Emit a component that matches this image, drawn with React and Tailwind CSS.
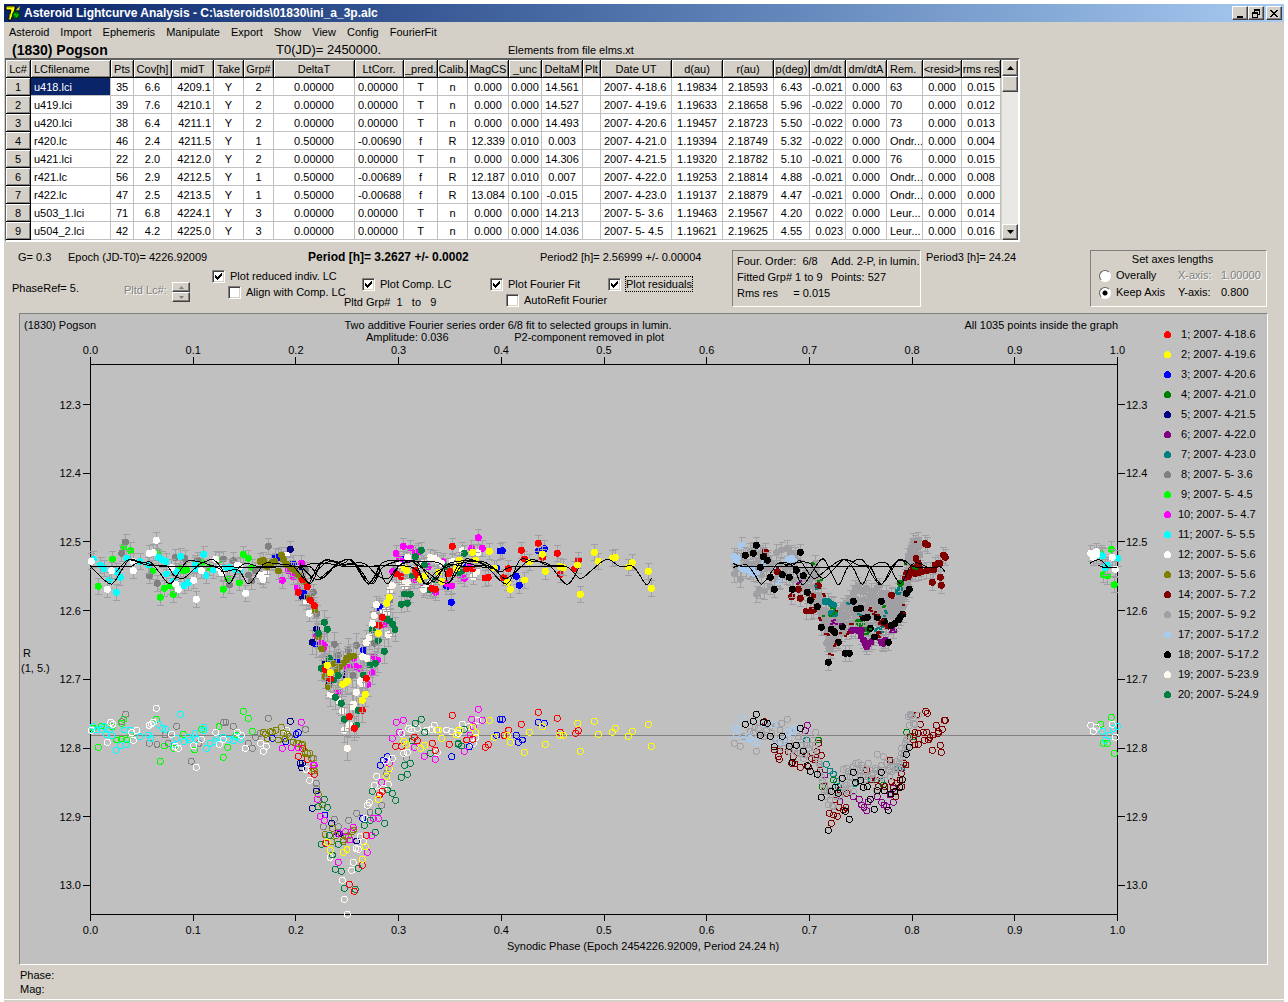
import { useState } from 'react';

const COLORS = {
    1: '#ff0000', 2: '#ffff00', 3: '#0000ff', 4: '#008000', 5: '#000080',
    6: '#800080', 7: '#008080', 8: '#808080', 9: '#00ff00', 10: '#ff00ff',
    11: '#00ffff', 12: '#ffffff', 13: '#808000', 14: '#800000', 15: '#a0a0a4',
    17: '#a6caf0', 18: '#000000', 19: '#fffbf0', 20: '#008040',
};

const LEGEND = [
    [1, '2007- 4-18.6'], [2, '2007- 4-19.6'], [3, '2007- 4-20.6'], [4, '2007- 4-21.0'],
    [5, '2007- 4-21.5'], [6, '2007- 4-22.0'], [7, '2007- 4-23.0'], [8, '2007- 5- 3.6'],
    [9, '2007- 5- 4.5'], [10, '2007- 5- 4.7'], [11, '2007- 5- 5.5'], [12, '2007- 5- 5.6'],
    [13, '2007- 5- 5.6'], [14, '2007- 5- 7.2'], [15, '2007- 5- 9.2'], [17, '2007- 5-17.2'],
    [18, '2007- 5-17.2'], [19, '2007- 5-23.9'], [20, '2007- 5-24.9'],
];

const MENU = ['Asteroid', 'Import', 'Ephemeris', 'Manipulate', 'Export', 'Show', 'View', 'Config', 'FourierFit'];

const COLUMNS = [
    { label: 'Lc#', col: 'w-[25px]' },
    { label: 'LCfilename', col: 'w-[80px]', align: 'text-left pl-[3px]' },
    { label: 'Pts', col: 'w-[23px]' },
    { label: 'Cov[h]', col: 'w-[38px]' },
    { label: 'midT', col: 'w-[42px]', align: 'text-right pr-[2px]' },
    { label: 'Take', col: 'w-[30px]' },
    { label: 'Grp#', col: 'w-[30px]' },
    { label: 'DeltaT', col: 'w-[81px]' },
    { label: 'LtCorr.', col: 'w-[49px]', align: 'text-left pl-[3px]' },
    { label: '_pred.', col: 'w-[34px]' },
    { label: 'Calib.', col: 'w-[30px]' },
    { label: 'MagCS', col: 'w-[41px]' },
    { label: '_unc', col: 'w-[33px]' },
    { label: 'DeltaM', col: 'w-[41px]' },
    { label: 'Plt', col: 'w-[18px]' },
    { label: 'Date UT', col: 'w-[71px]', align: 'text-left pl-[3px]' },
    { label: 'd(au)', col: 'w-[51px]' },
    { label: 'r(au)', col: 'w-[51px]' },
    { label: 'p(deg)', col: 'w-[36px]' },
    { label: 'dm/dt', col: 'w-[36px]', align: 'text-right pr-[2px]' },
    { label: 'dm/dtA', col: 'w-[41px]' },
    { label: 'Rem.', col: 'w-[36px]', align: 'text-left pl-[3px]' },
    { label: '<resid>', col: 'w-[39px]' },
    { label: 'rms res', col: 'w-[39px]' },
];

const ROWS = [
    '1|u418.lci|35|6.6|4209.1|Y|2|0.00000|0.00000|T|n|0.000|0.000|14.561||2007- 4-18.6|1.19834|2.18593|6.43|-0.021|0.000|63|0.000|0.015',
    '2|u419.lci|39|7.6|4210.1|Y|2|0.00000|0.00000|T|n|0.000|0.000|14.527||2007- 4-19.6|1.19633|2.18658|5.96|-0.022|0.000|70|0.000|0.012',
    '3|u420.lci|38|6.4|4211.1|Y|2|0.00000|0.00000|T|n|0.000|0.000|14.493||2007- 4-20.6|1.19457|2.18723|5.50|-0.022|0.000|73|0.000|0.013',
    '4|r420.lc|46|2.4|4211.5|Y|1|0.50000|-0.00690|f|R|12.339|0.010|0.003||2007- 4-21.0|1.19394|2.18749|5.32|-0.022|0.000|Ondr...|0.000|0.004',
    '5|u421.lci|22|2.0|4212.0|Y|2|0.00000|0.00000|T|n|0.000|0.000|14.306||2007- 4-21.5|1.19320|2.18782|5.10|-0.021|0.000|76|0.000|0.015',
    '6|r421.lc|56|2.9|4212.5|Y|1|0.50000|-0.00689|f|R|12.187|0.010|0.007||2007- 4-22.0|1.19253|2.18814|4.88|-0.021|0.000|Ondr...|0.000|0.008',
    '7|r422.lc|47|2.5|4213.5|Y|1|0.50000|-0.00688|f|R|13.084|0.100|-0.015||2007- 4-23.0|1.19137|2.18879|4.47|-0.021|0.000|Ondr...|0.000|0.000',
    '8|u503_1.lci|71|6.8|4224.1|Y|3|0.00000|0.00000|T|n|0.000|0.000|14.213||2007- 5- 3.6|1.19463|2.19567|4.20|0.022|0.000|Leur...|0.000|0.014',
    '9|u504_2.lci|42|4.2|4225.0|Y|3|0.00000|0.00000|T|n|0.000|0.000|14.036||2007- 5- 4.5|1.19621|2.19625|4.55|0.023|0.000|Leur...|0.000|0.016',
].map((row) => row.split('|'));

// Readings are stored per block, in thirds of a plot unit from the block's origin
const parse = (ox, oy, text) =>
    text.trim().split(/\s+/).map((pair) => {
        const [x, y] = pair.split(',').map(Number);
        return [ox + x / 3, oy + y / 3];
    });

const MEASURED = [
    { origin: [80, 500], series: [
        [9, '55,259 97,177 131,142 152,152 233,155 241,292 253,265 280,283 270,258 310,212 365,187 387,203 430,268 443,236 478,248 490,163 505,175 517,203 218,213 300,205 320,210 417,180'],
        [8, '137,126 125,160 208,227 232,250 285,173 315,175 345,190 565,139 515,243 527,212 449,255 430,177 460,182 677,210 700,277 710,341 763,433 829,436 805,452 775,466 818,526 883,430 353,180 505,225'],
        [11, '40,178 62,195 72,205 88,240 109,277 121,232 140,175 180,185 205,195 235,172 245,178 258,185 302,169 371,163 280,243 312,256 325,248 345,195 378,227 400,210 430,205 448,203 465,208 480,215 260,222 290,215 350,210 110,215'],
        [12, '34,184 82,268 95,212 160,185 160,212 208,160 220,158 229,121 275,203 295,268 287,252 341,241 364,212 407,178 349,298 425,218 472,195 497,280 418,205 545,230 549,238 558,222 540,225 620,165 678,303 688,340 480,200'],
        [5, '631,148 697,427 709,387 667,291 735,490 658,212 795,523 745,550'],
        [3, '587,168 595,172 710,435 672,275 850,450 852,460 898,324 640,190 770,485'],
        [10, '664,189 607,241 625,212 640,210 652,262 640,230 710,407 733,437 730,445 725,430 773,576 808,502 828,500 840,505 820,475 882,470 876,518 863,553 893,480 800,505'],
        [13, '550,181 540,185 562,200 575,188 595,213 585,185 604,165 610,178 620,193 635,205 645,212 655,225 665,235 672,245 705,330 715,410 725,446 735,530 745,560 735,500 760,490 770,510 780,500 790,490 800,480 810,470 820,468 688,295 800,475'],
        [19, '802,745 793,691 787,633 808,675 820,612 817,620 829,577 841,545 847,552 859,428 868,412 883,346 890,314 751,583 778,604 845,540 877,373 848,470 860,475'],
        [20, '733,367 742,388 715,400 748,475 724,505 760,540 766,592 784,610 775,526 793,658 829,675 835,631 850,525 870,495 886,490 877,388 895,421'],
        [1, '655,277 682,260 691,301 703,317 668,240 735,508 752,537 808,650 823,685 847,631 859,535 895,376'],
        [2, '742,496 751,518 788,553 797,548 803,544 847,601 856,583 895,400'],
    ] },
    { origin: [300, 500], series: [
        [8, '223,430 270,300 285,205 320,275'],
        [3, '238,320 454,307 600,153 607,152 590,204 649,229 658,256 715,153 733,146 310,178 440,260 500,200'],
        [10, '310,139 331,144 288,160 298,178 345,160 278,215 320,180 343,240 373,262 407,277 535,113 547,145 515,145 430,185 493,235 510,200 455,257 385,200 440,250 250,375 480,225 355,155'],
        [19, '323,172 310,250 322,248 315,258 390,172 403,175 412,182 371,268 378,262 457,184 487,152 533,158 520,230 472,190 530,215 265,404 277,256 270,270 229,314 222,346 218,370 250,335 262,335 350,205 370,190 425,190 298,195 390,250'],
        [20, '253,454 285,388 278,373 270,363 262,358 313,282 331,283 304,313 322,310 364,151 346,170 373,195 337,228 406,240 390,270 493,160 485,212 440,200 235,421 475,220'],
        [1, '247,352 238,376 290,222 303,230 347,210 350,220 395,265 406,268 446,222 450,215 457,139 500,207 518,207 555,234 565,232 611,233 625,206 664,151 673,177 715,130 728,172 772,160 781,223 823,207 835,180 355,230'],
        [2, '235,400 260,310 268,292 313,205 320,212 362,238 375,228 416,217 426,245 470,205 478,180 518,157 527,180 568,154 583,204 622,247 631,268 674,240 688,186 727,163 736,214 780,200 790,203 833,195 841,283 883,157 895,184 937,174 946,172 985,201 997,188 1045,214 1054,265'],
    ] },
    { origin: [700, 500], series: [
        [15, '103,222 121,238 170,283 193,273 130,170 150,155 160,150 180,160 190,165 230,158 262,145 240,195 255,210 215,190 200,205 210,260 232,235 285,165 290,180 270,200 280,240 300,230 310,260 320,215 335,215 345,190 350,205 330,240 345,260 322,265 340,285 355,245 360,310 360,330 365,345 370,360 375,380 380,400 385,420 388,440 392,450 395,360 400,400 405,345 410,380 420,330 430,320 440,310 450,295 460,280 465,265 475,255 480,270 470,300 490,275 500,265 490,300 510,290 500,320 520,310 530,265 538,258 545,280 550,300 560,280 545,320 565,300 575,290 580,310 590,300 600,290 600,315 605,275 612,290 570,330 585,340 560,345 540,340 520,345 480,340 460,340 440,350 430,365 450,370 475,360 500,345 530,360 595,335 410,420 425,400 440,395 380,335 395,375 415,350 445,330 460,315 480,320 515,330 620,260 625,240 630,215 635,195 625,185 630,160 635,140 640,125 645,130 655,120 650,145 640,160 660,165 640,180'],
        [15, '110,205 140,190 165,195 175,180 185,225 180,270 205,175 225,210 245,150 260,230 275,160 300,250 315,235 335,235 350,225 355,285 365,290 350,300 375,350 385,365 390,395 400,430 380,430 405,365 420,355 430,345 455,320 470,320 490,330 505,305 515,275 525,290 540,300 555,320 570,310 585,325 605,305 610,320 595,350 575,350 550,350 530,325 510,350 490,355 465,355 455,385 480,380 510,375 535,350 615,275 622,225 625,170 632,150 655,135 630,235'],
        [17, '125,137 103,170 112,175 108,182 125,205 140,210 150,215 160,220 170,222 155,208 230,205 237,245 265,178 275,175 282,185 240,240 193,190'],
        [14, '196,155 232,215 275,290 301,295 320,333 333,333 340,330 338,290 355,257 295,268 537,404 560,380 575,285 545,370 675,130 682,135 730,165 736,172 697,247 721,232 724,256 715,190 705,195 690,210 680,212 665,215 655,218 645,220 635,215 615,232 625,230 648,175 655,190 650,200 640,205 660,205 700,210 720,190 620,220'],
        [7, '375,305 385,305 395,312 400,315 393,340 405,340 595,275 600,268'],
        [4, '602,250 475,367 485,368 497,390 500,395'],
        [6, '455,392 465,390 475,392 485,390 483,408 490,420 495,430 500,440 508,430 515,425 545,428 550,430 556,420 580,390'],
        [18, '136,166 160,160 169,136 190,170 202,181 181,202 211,232 247,224 268,232 223,268 289,211 301,157 310,227 277,268 322,277 331,301 352,320 364,382 427,380 394,388 400,393 405,397 415,427 385,487 436,460 448,460 460,304 470,327 482,325 490,354 502,352 511,385 523,411 532,352 544,304 553,364 565,427 573,376 585,370 595,360 600,352 608,343 619,280 628,268'],
        [9, '1234,148 1210,224 1222,228 1243,254 1203,160'],
        [11, '1205,167 1208,168 1254,175 1215,202 1222,195'],
        [12, '1172,160 1180,172 1189,155 1190,165 1237,172 1246,208'],
    ] },
];

// Specks of the fainter series that show through the grey cluster
const SPECKS = [
    [14, '370,280 372,286 358,350 360,356 375,400 380,398 405,430 402,436 395,462 388,460 440,400 436,405 444,392 510,320 506,326 514,330 480,345 455,368 450,370 420,395 408,330 520,340 535,342 524,333 546,358 552,376 612,335 575,292 330,320 384,402 232,200 290,250 646,122 610,312'],
    [7, '445,308 440,306 555,330 558,336 540,385 546,392 528,385 534,380 475,340 480,343 345,255 348,265 552,345 545,378 525,390'],
    [4, '355,240 362,238 398,340 390,345 404,332 640,200 648,203 550,318 552,314 340,190 336,186 394,320 402,325 480,376 510,384 616,190 370,346'],
    [6, '400,365 395,360 408,368 392,370 402,356 300,240 294,246 572,386 586,394 570,394 535,418 420,368 612,235'],
];

const RESIDUALS = [
    { origin: [80, 500], series: [
        [9, '55,742 97,680 131,658 125,670 152,706 241,784 253,738 281,745 310,703 344,750 365,688 430,772 443,742 490,634 505,655 517,694 417,680 229,658 64,678 110,720 140,720 40,685 125,717 470,705'],
        [8, '137,643 125,665 208,730 231,733 290,679 334,784 357,730 438,667 431,667 460,679 505,730 517,745 527,712 565,655 676,688 255,705 265,730 540,700 700,775'],
        [11, '40,680 72,680 88,690 50,690 65,688 80,703 95,707 109,751 121,737 140,733 134,690 152,690 180,710 205,705 213,715 235,673 248,685 257,688 302,643 280,735 290,715 312,725 325,712 330,720 345,700 350,718 371,682 380,745 390,730 405,725 410,715 430,712 448,718 460,722 470,710 482,718 33,690 372,692'],
        [12, '34,691 82,727 92,667 99,673 160,721 170,691 155,698 207,676 214,672 220,667 229,625 275,703 286,739 295,745 341,737 349,802 364,718 407,697 418,733 472,697 484,706 430,718 496,745 542,730 559,739 550,754 620,690'],
        [5, '631,664 667,790 660,790'],
        [3, '577,715 617,725 648,703 655,698'],
        [10, '664,667 607,745 634,743 703,796'],
        [13, '550,697 557,703 562,715 571,695 577,696 587,691 595,720 604,682 610,700 615,715 622,703 628,710 640,727 650,730 655,730 668,733 675,755 690,760'],
        [1, '655,769 668,745 682,778 694,814 703,823'],
    ] },
    { origin: [200, 690], series: [
        [8, '349,280 341,205 317,118 370,410 403,388 415,410 446,391 470,370 510,367 545,346 560,250 350,295 620,205'],
        [5, '301,220 305,233 349,303 337,355 395,400 413,430 418,432 470,453'],
        [3, '562,200 550,210 541,226 495,385 488,385 375,375 755,200'],
        [13, '295,160 305,165 315,190 322,190 335,205 340,235 343,243 355,313 397,415 375,433 408,437 395,455 430,450 438,440 445,437 455,425 460,420 368,345 430,455'],
        [10, '295,173 340,225 352,328 361,379 373,391 415,517 437,425 460,412 450,450 502,487 535,385 545,277 568,220 577,145 598,127 589,97 610,91 643,172 673,199 706,208 520,385 515,437 415,430'],
        [19, '329,271 318,238 390,502 427,571 433,628 442,673 455,541 460,517 475,478 480,440 502,346 508,338 523,286 530,259 565,283 550,295 557,212 577,205 611,190 622,187 626,115 635,120 652,115 680,120 703,106 695,118 710,120 712,187 755,125 740,120 495,385 490,455 468,475 535,305 605,130'],
        [20, '373,328 382,352 355,350 388,436 364,463 397,495 406,538 424,544 433,595 466,598 475,535 415,463 526,427 554,400 493,406 511,391 535,364 517,304 562,300 577,310 587,331 604,262 622,253 614,226 631,220 646,100 664,88 674,127 637,152 691,190 775,160'],
        [1, '377,460 448,583 463,604 487,526 499,436 547,304 538,315 587,169 605,169 643,142 652,152 697,160 706,181 748,163 757,76'],
        [2, '382,457 391,481 430,487 441,479 487,508 496,470 535,328 560,259 568,236 611,154 620,163 662,175 674,166 715,120 725,145 770,135 775,120'],
    ] },
    { origin: [300, 500], series: [
        [12, '487,673 505,680 533,661 520,730 475,700 528,712'],
        [3, '600,658 607,658 590,706 649,706 655,727 667,720 715,667 733,670 508,740'],
        [10, '535,628 515,658 547,661 493,754 520,680 510,705'],
        [20, '493,688 485,738 475,733'],
        [1, '500,720 518,718 556,742 565,734 612,706 626,690 664,673 715,637 772,655 781,697 827,700 835,692'],
        [2, '478,691 527,698 518,682 568,661 583,712 622,706 631,727 673,757 688,697 727,680 736,733 779,706 790,706 833,670 841,754 883,664 895,703 937,697 946,685 985,709 997,694 1045,673 1054,739'],
    ] },
    { origin: [700, 690], series: [
        [4, '620,127 640,140 355,150 400,270 367,290 550,285'],
        [6, '322,106 316,122 478,328 485,345 492,352 500,362 460,320 532,320 545,337 552,345 560,350 580,337 570,315 505,335 580,295 420,335 605,235 375,255'],
        [7, '379,223 390,243 400,252 410,275 415,290 320,150 595,235 605,232 465,280 515,270 545,275'],
        [14, '193,95 235,200 238,208 223,180 240,183 265,185 275,220 285,222 301,232 280,200 320,195 325,230 335,205 345,210 350,185 364,196 356,160 360,240 388,370 400,375 412,379 394,400 417,352 430,360 438,352 405,330 420,300 375,290 440,310 500,240 510,270 530,270 535,290 555,290 575,275 580,290 587,320 590,280 600,270 604,250 605,290 612,220 618,225 677,64 682,70 709,106 715,125 727,118 733,91 736,91 697,181 721,166 724,187 690,142 680,127 673,151 670,127 655,130 655,163 645,127 640,150 630,140 661,103 650,75 700,135 715,130 685,150 570,210 645,165'],
        [15, '103,160 121,169 169,184 130,140 262,88 230,105 240,120 160,130 175,115 185,130 200,120 210,110 240,160 250,175 270,185 280,180 295,140 310,140 320,165 330,165 340,150 347,127 345,175 325,175 300,190 310,205 355,215 360,230 360,255 368,275 375,285 380,320 385,345 397,348 390,300 420,320 430,238 445,245 450,260 460,230 467,220 475,218 480,240 490,235 505,220 510,240 490,260 520,250 530,240 532,193 550,200 545,225 560,220 570,230 575,215 590,215 585,240 600,205 605,190 610,200 600,235 570,260 555,255 535,260 505,262 480,260 450,280 435,300 460,305 530,300 615,180 615,160 625,140 628,106 625,80 632,72 640,85 655,76 645,103 440,285'],
        [15, '150,125 165,110 190,140 215,130 225,145 255,150 270,160 285,165 305,165 315,195 335,190 310,180 290,190 270,120 245,100 350,200 358,222 365,262 372,300 382,305 390,330 400,350 410,320 425,265 440,235 455,245 470,235 485,225 495,245 515,255 525,235 540,245 550,240 565,240 580,228 592,230 597,220 605,175 612,190 620,150 622,170 630,75 635,78 640,100 575,245 545,262 520,265 495,270 465,265 440,260 430,290 445,305 430,310'],
        [17, '103,111 112,118 109,133 125,83 130,147 145,140 150,145 160,155 172,158 222,105 192,102 235,155 245,155 260,145 265,128 272,120 280,125 290,115'],
        [18, '136,103 160,94 169,73 190,97 202,100 181,136 211,139 247,139 301,115 223,170 268,169 289,166 310,184 277,217 322,227 331,244 352,253 364,322 385,421 394,304 406,292 415,310 427,265 436,364 448,388 460,247 467,277 482,271 490,292 502,290 511,328 523,358 544,247 532,302 553,302 565,361 573,312 585,305 600,292 607,269 619,193 628,172'],
        [9, '1234,82 1202,103 1210,160 1222,160 1243,190'],
        [11, '1252,109 1208,124 1228,136 1216,151 1240,115'],
        [12, '1172,106 1180,124 1189,112 1237,103 1246,142'],
    ] },
];

const FIT_CURVES = [
    [80, 500, '32,200 60,228 95,252 125,210 150,178 185,188 212,187 240,220 270,252 300,212 325,182 370,187 397,178 425,205 447,252 475,205 500,190 540,200 640,200'],
    [80, 500, '32,200 110,200 150,200 180,186 220,195 265,200 400,200 430,215 475,210 505,252 535,215 555,190 600,192 640,200 690,250 720,195 740,178 770,188 805,178 835,205 865,250 900,200'],
    [80, 500, '110,215 145,180 200,195 260,198 280,225 310,235 345,205 370,188 420,200 640,200 700,190 740,190 800,200 900,200'],
    [80, 500, '650,205 690,200 725,235 765,195 810,180 850,230 880,250 900,215'],
    [300, 500, '0,190 25,250 55,195 85,180 130,190 155,180 205,252 240,195 265,182 300,182 345,190 375,250 400,240 440,195 470,185 520,182 560,200 620,252 660,180 700,185 745,192 800,253 835,205'],
    [300, 500, '0,195 40,235 68,235 110,195 150,178 185,215 215,250 250,200 320,180 360,200 440,250 490,185 510,178 580,205 620,235 690,180 740,195 800,200 840,235 870,215 920,178 960,200 1000,200 1038,253 1054,235'],
    [300, 500, '30,235 85,185 150,200 330,200 375,252 410,215 480,190 550,185 600,215 640,200 800,200'],
    [300, 500, '60,235 120,195 210,200 235,200 262,252 300,195 350,185 400,245 440,195 500,200 560,195'],
    [300, 500, '120,195 190,190 230,225 265,235 310,190 420,190 445,250 480,190 540,200 580,205'],
    [700, 500, '100,202 140,195 165,225 185,252 215,215 235,190 275,195 300,245 315,250 350,195 372,178 400,230 418,253 445,200 485,178 520,230 545,253 580,195 610,180 640,200 700,203 720,200 735,215'],
    [700, 500, '100,190 135,200 270,200 320,202 460,200 610,200'],
    [700, 500, '240,190 280,195 300,182 330,225 347,235 385,205 430,178 460,205 487,253 515,200 560,190 600,250 630,200 650,188 680,200'],
    [700, 500, '250,200 290,188 330,190 370,235 430,180 475,195 510,200 545,252 595,180 620,195'],
    [700, 500, '1170,190 1190,180 1205,182 1225,202 1250,202'],
    [700, 500, '1195,195 1215,203 1250,202'],
];

// Catmull-Rom spline through the points
const smooth = (pts) => {
    let d = `M${pts[0][0]} ${pts[0][1]}`;
    for (let i = 0; i < pts.length - 1; i++) {
        const p0 = pts[i - 1] || pts[i];
        const p1 = pts[i];
        const p2 = pts[i + 1];
        const p3 = pts[i + 2] || p2;
        const c = [
            p1[0] + (p2[0] - p0[0]) / 6, p1[1] + (p2[1] - p0[1]) / 6,
            p2[0] - (p3[0] - p1[0]) / 6, p2[1] - (p3[1] - p1[1]) / 6,
        ];
        d += `C${c.map((v) => v.toFixed(1)).join(' ')} ${p2[0].toFixed(1)} ${p2[1].toFixed(1)}`;
    }
    return d;
};

const X_TICKS = Array.from({ length: 11 }, (_, i) => ({ x: 90.5 + i * 102.7, label: (i / 10).toFixed(1) }));
const Y_TICKS = Array.from({ length: 8 }, (_, i) => ({ y: 404.5 + i * 68.7, label: (12.3 + i / 10).toFixed(1) }));

function Chart() {
    const measured = MEASURED.flatMap(({ origin, series }) =>
        series.map(([id, text]) => ({ id, pts: parse(origin[0], origin[1], text) })));
    const residuals = RESIDUALS.flatMap(({ origin, series }) =>
        series.map(([id, text]) => ({ id, pts: parse(origin[0], origin[1], text) })));

    return (
        <svg viewBox="20 314 1142 650" className="block min-w-0 flex-1" fontFamily="'Liberation Sans', Arial, sans-serif" fontSize="11" role="img" aria-label="Light curve">
            <text x="24" y="329">(1830) Pogson</text>
            <text x="508" y="329" textAnchor="middle">Two additive Fourier series order 6/8 fit to selected groups in lumin.</text>
            <text x="366" y="341">Amplitude: 0.036</text>
            <text x="664" y="341" textAnchor="end">P2-component removed in plot</text>
            <text x="1118" y="329" textAnchor="end">All 1035 points inside the graph</text>
            <text x="23" y="657">R</text>
            <text x="21" y="672">(1, 5.)</text>
            <text x="643" y="950" textAnchor="middle">Synodic Phase (Epoch 2454226.92009, Period 24.24 h)</text>

            {X_TICKS.map(({ x, label }) => (
                <g key={label} textAnchor="middle">
                    <text x={x} y="354">{label}</text>
                    <text x={x} y="934">{label}</text>
                    <path d={`M${x} 357V364M${x} 914V921`} stroke="#000" shapeRendering="crispEdges" />
                </g>
            ))}
            {Y_TICKS.map(({ y, label }) => (
                <g key={label}>
                    <text x="81" y={y + 4} textAnchor="end">{label}</text>
                    <text x="1126" y={y + 4}>{label}</text>
                    <path d={`M83 ${y}H90M1118 ${y}H1125`} stroke="#000" shapeRendering="crispEdges" />
                </g>
            ))}
            <rect x="90.5" y="364.5" width="1027" height="550" fill="none" stroke="#000" shapeRendering="crispEdges" />
            <path d="M91 735.5H1117" stroke="#808080" shapeRendering="crispEdges" />

            <g shapeRendering="crispEdges">
                {measured.map(({ id, pts }, i) => (
                    <g key={i}>
                        {pts.map(([x, y], j) => {
                            const e = y > 620 && x < 450 ? 12 : 8;
                            return (
                                <path
                                    key={j}
                                    d={`M${x} ${y - e}V${y + e}M${x - 3} ${y - e}h7M${x - 3} ${y + e}h7`}
                                    stroke="#a0a0a4"
                                />
                            );
                        })}
                        {pts.map(([x, y], j) => <circle key={j} cx={x} cy={y} r="3.5" fill={COLORS[id]} />)}
                    </g>
                ))}
                {SPECKS.map(([id, text]) => (
                    <g key={id} fill={COLORS[id]}>
                        {parse(700, 500, text).map(([x, y], j) => <rect key={j} x={x - 1} y={y} width="3" height="2" />)}
                    </g>
                ))}
                {residuals.map(({ id, pts }, i) => (
                    <g key={i} fill="none" stroke={COLORS[id]}>
                        {pts.map(([x, y], j) => <circle key={j} cx={x} cy={y} r="3" />)}
                    </g>
                ))}
                {FIT_CURVES.map(([ox, oy, text], i) => (
                    <path key={i} d={smooth(parse(ox, oy, text))} fill="none" stroke="#000" />
                ))}
            </g>
        </svg>
    );
}

function Check({ label, defaultChecked = false, focused = false, className = '' }) {
    const [checked, setChecked] = useState(defaultChecked);
    return (
        <label className={`flex h-4 items-center gap-1 whitespace-nowrap ${className}`}>
            <span className="grid size-[13px] place-items-center">
                <input
                    type="checkbox"
                    checked={checked}
                    onChange={() => setChecked(!checked)}
                    className="col-start-1 row-start-1 size-[13px] appearance-none border border-t-[#808080] border-l-[#808080] border-r-white border-b-white bg-white shadow-[inset_1px_1px_0_#404040,inset_-1px_-1px_0_#d4d0c8]"
                />
                {checked && (
                    <svg viewBox="0 0 7 7" className="pointer-events-none col-start-1 row-start-1 size-[7px]" shapeRendering="crispEdges">
                        <path d="M0 2h1v1h1v1h1v-1h1v-1h1v-1h1v-1h1v3h-1v1h-1v1h-1v1h-1v1h-1v-1h-1v-1h-1z" />
                    </svg>
                )}
            </span>
            <span className={focused ? 'border border-dotted border-black leading-[14px]' : 'px-px'}>{label}</span>
        </label>
    );
}

function Radio({ label, defaultChecked = false }) {
    return (
        <label className="flex items-center gap-[5px] whitespace-nowrap">
            <input
                type="radio"
                name="axes"
                defaultChecked={defaultChecked}
                className="size-3 appearance-none rounded-full border border-t-[#606060] border-l-[#606060] border-r-white border-b-white bg-white checked:bg-[radial-gradient(circle,#000_2px,#fff_3px)]"
            />
            {label}
        </label>
    );
}

const RAISED = 'flex items-center justify-center border border-t-white border-l-white border-r-[#404040] border-b-[#404040] bg-[#d4d0c8] shadow-[inset_-1px_-1px_0_#808080]';
const SUNKEN = 'border border-t-[#808080] border-l-[#808080] border-r-white border-b-white';
const DISABLED = 'text-[#808080] [text-shadow:1px_1px_0_#fff]';

function TitleBar() {
    return (
        <header className="flex h-[18px] items-center bg-linear-to-r from-[#0a246a] to-[#a6caf0] pr-[2px] pl-px">
            <svg viewBox="0 0 16 16" className="size-4 shrink-0">
                <path d="M1 1h9v3L6 15H3L6 5H1z" fill="#ffff00" stroke="#000" />
                <path d="M2 2h6M5 9l-1 5" stroke="#808000" />
                <circle cx="11" cy="10" r="3.5" fill="#008000" stroke="#003000" />
                <path d="M9 9l2 1M11 12l2-3" stroke="#00ff00" />
                <path d="M11 5l4-4-1 4z" fill="#ffff00" stroke="#808000" strokeWidth=".5" />
            </svg>
            <h1 className="ml-[3px] flex-1 truncate text-[12px] font-bold text-white">
                Asteroid Lightcurve Analysis - C:\asteroids\01830\ini_a_3p.alc
            </h1>
            <button aria-label="Minimize" className={`${RAISED} h-[14px] w-4`}>
                <svg viewBox="0 0 10 9" className="h-[9px] w-[10px]" shapeRendering="crispEdges"><path d="M2 7h6v2H2z" /></svg>
            </button>
            <button aria-label="Restore" className={`${RAISED} h-[14px] w-4`}>
                <svg viewBox="0 0 10 9" className="h-[9px] w-[10px]" fill="none" stroke="#000" shapeRendering="crispEdges">
                    <path d="M3.5 3V.5h5v5H7M3 1.5h6M1.5 3.5h5v5h-5zM1 4.5h6" />
                </svg>
            </button>
            <button aria-label="Close" className={`${RAISED} ml-[2px] h-[14px] w-4`}>
                <svg viewBox="0 0 8 7" className="h-[7px] w-2" shapeRendering="crispEdges">
                    <path d="M0 0h2v1h1v1h2v-1h1v-1h2v1h-1v1h-1v1h-1v1h1v1h1v1h1v1h-2v-1h-1v-1h-2v1h-1v1h-2v-1h1v-1h1v-1h1v-1h-1v-1h-1v-1h-1z" />
                </svg>
            </button>
        </header>
    );
}

function LightcurveTable() {
    const head = 'h-[18px] overflow-hidden border-r border-b border-black bg-[#d4d0c8] pt-px pr-0 pb-0 font-normal whitespace-nowrap shadow-[inset_1px_1px_0_#fff,inset_-1px_-1px_0_#808080]';
    return (
        <div className="ml-px flex w-fit border-t-2 border-l border-t-[#606060] border-l-[#606060] border-r-2 border-b-2 border-r-white border-b-white">
            <table className="w-[995px] table-fixed border-separate border-spacing-0 bg-white text-center leading-4">
                <colgroup>
                    {COLUMNS.map((c) => <col key={c.label} className={c.col} />)}
                </colgroup>
                <thead>
                    <tr>
                        {COLUMNS.map((c) => (
                            <th
                                key={c.label}
                                scope="col"
                                className={`${head} ${c.label === 'LCfilename' || c.label === 'Rem.' ? 'pl-[3px] text-left' : 'pl-0 text-center'}`}
                            >
                                {c.label}
                            </th>
                        ))}
                    </tr>
                </thead>
                <tbody>
                    {ROWS.map((row, r) => (
                        <tr key={row[1]}>
                            <th scope="row" className={`${head} pl-0`}>{row[0]}</th>
                            {row.slice(1).map((value, i) => (
                                <td
                                    key={i}
                                    className={`h-[18px] overflow-hidden border-r border-b border-[#c0c0c0] pt-px pb-0 whitespace-nowrap ${COLUMNS[i + 1].align || 'px-0'} ${r === 0 && i === 0 ? 'bg-[#0a246a] text-white' : ''}`}
                                >
                                    {value}
                                </td>
                            ))}
                        </tr>
                    ))}
                </tbody>
            </table>
            <div className="ml-px flex w-4 flex-col bg-[#eae8e4]">
                <button aria-label="Scroll up" className={`${RAISED} h-4`}>
                    <svg viewBox="0 0 7 4" className="h-1 w-[7px]"><path d="M3.5 0L7 4H0z" /></svg>
                </button>
                <div className={`${RAISED} h-4`} />
                <div className="flex-1" />
                <button aria-label="Scroll down" className={`${RAISED} h-4`}>
                    <svg viewBox="0 0 7 4" className="h-1 w-[7px]"><path d="M0 0h7L3.5 4z" /></svg>
                </button>
            </div>
        </div>
    );
}

function Controls() {
    return (
        <section className="flex h-[71px] items-start pr-[17px]">
            <div className="w-[728px] shrink-0 pt-[7px]">
                <div className="flex h-4 items-center whitespace-nowrap">
                    <span className="ml-3.5 w-[50px]">G= 0.3</span>
                    <span className="w-[240px]">Epoch (JD-T0)= 4226.92009</span>
                    <strong className="w-[232px] text-[12px]">Period [h]= 3.2627 +/- 0.0002</strong>
                    <span>Period2 [h]= 2.56999 +/- 0.00004</span>
                </div>
                <div className="flex items-start pt-[3px] whitespace-nowrap">
                    <span className="mt-[13px] ml-2 w-[112px]">PhaseRef= 5.</span>
                    <span className={`mt-[15px] w-12 ${DISABLED}`}>Pltd Lc#:</span>
                    <div className="mt-[14px] flex w-10 flex-col">
                        <button disabled aria-label="Next" className={`${RAISED} h-2.5 w-[18px]`}>
                            <svg viewBox="0 0 5 3" className="h-[3px] w-[5px]" fill="#808080"><path d="M2.5 0L5 3H0z" /></svg>
                        </button>
                        <button disabled aria-label="Previous" className={`${RAISED} h-2.5 w-[18px]`}>
                            <svg viewBox="0 0 5 3" className="h-[3px] w-[5px]" fill="#808080"><path d="M0 0h5L2.5 3z" /></svg>
                        </button>
                    </div>
                    <div className="w-[132px]">
                        <Check label="Plot reduced indiv. LC" defaultChecked />
                        <Check label="Align with Comp. LC" className="ml-4" />
                    </div>
                    <div className="w-[146px] pt-2">
                        <Check label="Plot Comp. LC" defaultChecked className="ml-[18px]" />
                        <p className="pt-[3px] whitespace-pre">Pltd Grp#  1   to   9</p>
                    </div>
                    <div className="w-[118px] pt-2">
                        <Check label="Plot Fourier Fit" defaultChecked />
                        <Check label="AutoRefit Fourier" className="ml-4" />
                    </div>
                    <div className="pt-2">
                        <Check label="Plot residuals" defaultChecked focused />
                    </div>
                </div>
            </div>
            <div className={`mt-2 grid h-[57px] w-[189px] shrink-0 grid-cols-[94px_1fr] content-start pt-[2px] pl-1 leading-4 whitespace-pre ${SUNKEN}`}>
                <span>Four. Order:  6/8</span>
                <span>Add. 2-P, in lumin.</span>
                <span>Fitted Grp# 1 to 9</span>
                <span>Points: 527</span>
                <span>Rms res     = 0.015</span>
            </div>
            <span className="mt-[7px] ml-[5px] leading-4 whitespace-nowrap">Period3 [h]= 24.24</span>
            <fieldset className={`mt-2 ml-auto h-[57px] w-[177px] shrink-0 pl-2 ${SUNKEN}`}>
                <p className="pr-5 text-center leading-4">Set axes lengths</p>
                <div className="grid grid-cols-[79px_43px_1fr] items-center leading-[17px]">
                    <Radio label="Overally" />
                    <span className={DISABLED}>X-axis:</span>
                    <span className={DISABLED}>1.00000</span>
                    <Radio label="Keep Axis" defaultChecked />
                    <span>Y-axis:</span>
                    <span>0.800</span>
                </div>
            </fieldset>
        </section>
    );
}

export default function App() {
    return (
        <div className="min-h-screen bg-white px-1 pt-1 font-['Liberation_Sans',Arial,sans-serif] text-[11px] leading-[14px] text-black">
            <main className="bg-[#d4d0c8]">
                <TitleBar />
                <nav className="flex h-5 items-center gap-[11px] pl-[5px]">
                    {MENU.map((item) => <button key={item}>{item}</button>)}
                </nav>
                <div className="flex h-4 items-center whitespace-nowrap">
                    <h2 className="w-[272px] pl-2 text-[14px] font-bold">(1830) Pogson</h2>
                    <span className="w-[232px] text-[13px]">T0(JD)= 2450000.</span>
                    <span>Elements from file elms.xt</span>
                </div>
                <LightcurveTable />
                <Controls />
                <section className={`mr-4 ml-[15px] flex items-start bg-[#c0c0c0] ${SUNKEN}`}>
                    <Chart />
                    <ul className="w-[105px] shrink-0 pt-2.5">
                        {LEGEND.map(([id, date]) => (
                            <li key={id} className="flex h-5 items-center gap-[7px] pl-0.5 whitespace-pre">
                                <svg viewBox="0 0 7 7" className="size-[7px]" shapeRendering="crispEdges">
                                    <circle cx="3.5" cy="3.5" r="3.5" fill={COLORS[id]} />
                                </svg>
                                <span>{`${id < 10 ? ' ' : ''}${id}; ${date}`}</span>
                            </li>
                        ))}
                    </ul>
                </section>
                <footer className="border-b border-white pt-[3px] pb-[3px] pl-4">
                    <p>Phase:</p>
                    <p>Mag:</p>
                </footer>
                <div className="h-0.5" />
            </main>
        </div>
    );
}
